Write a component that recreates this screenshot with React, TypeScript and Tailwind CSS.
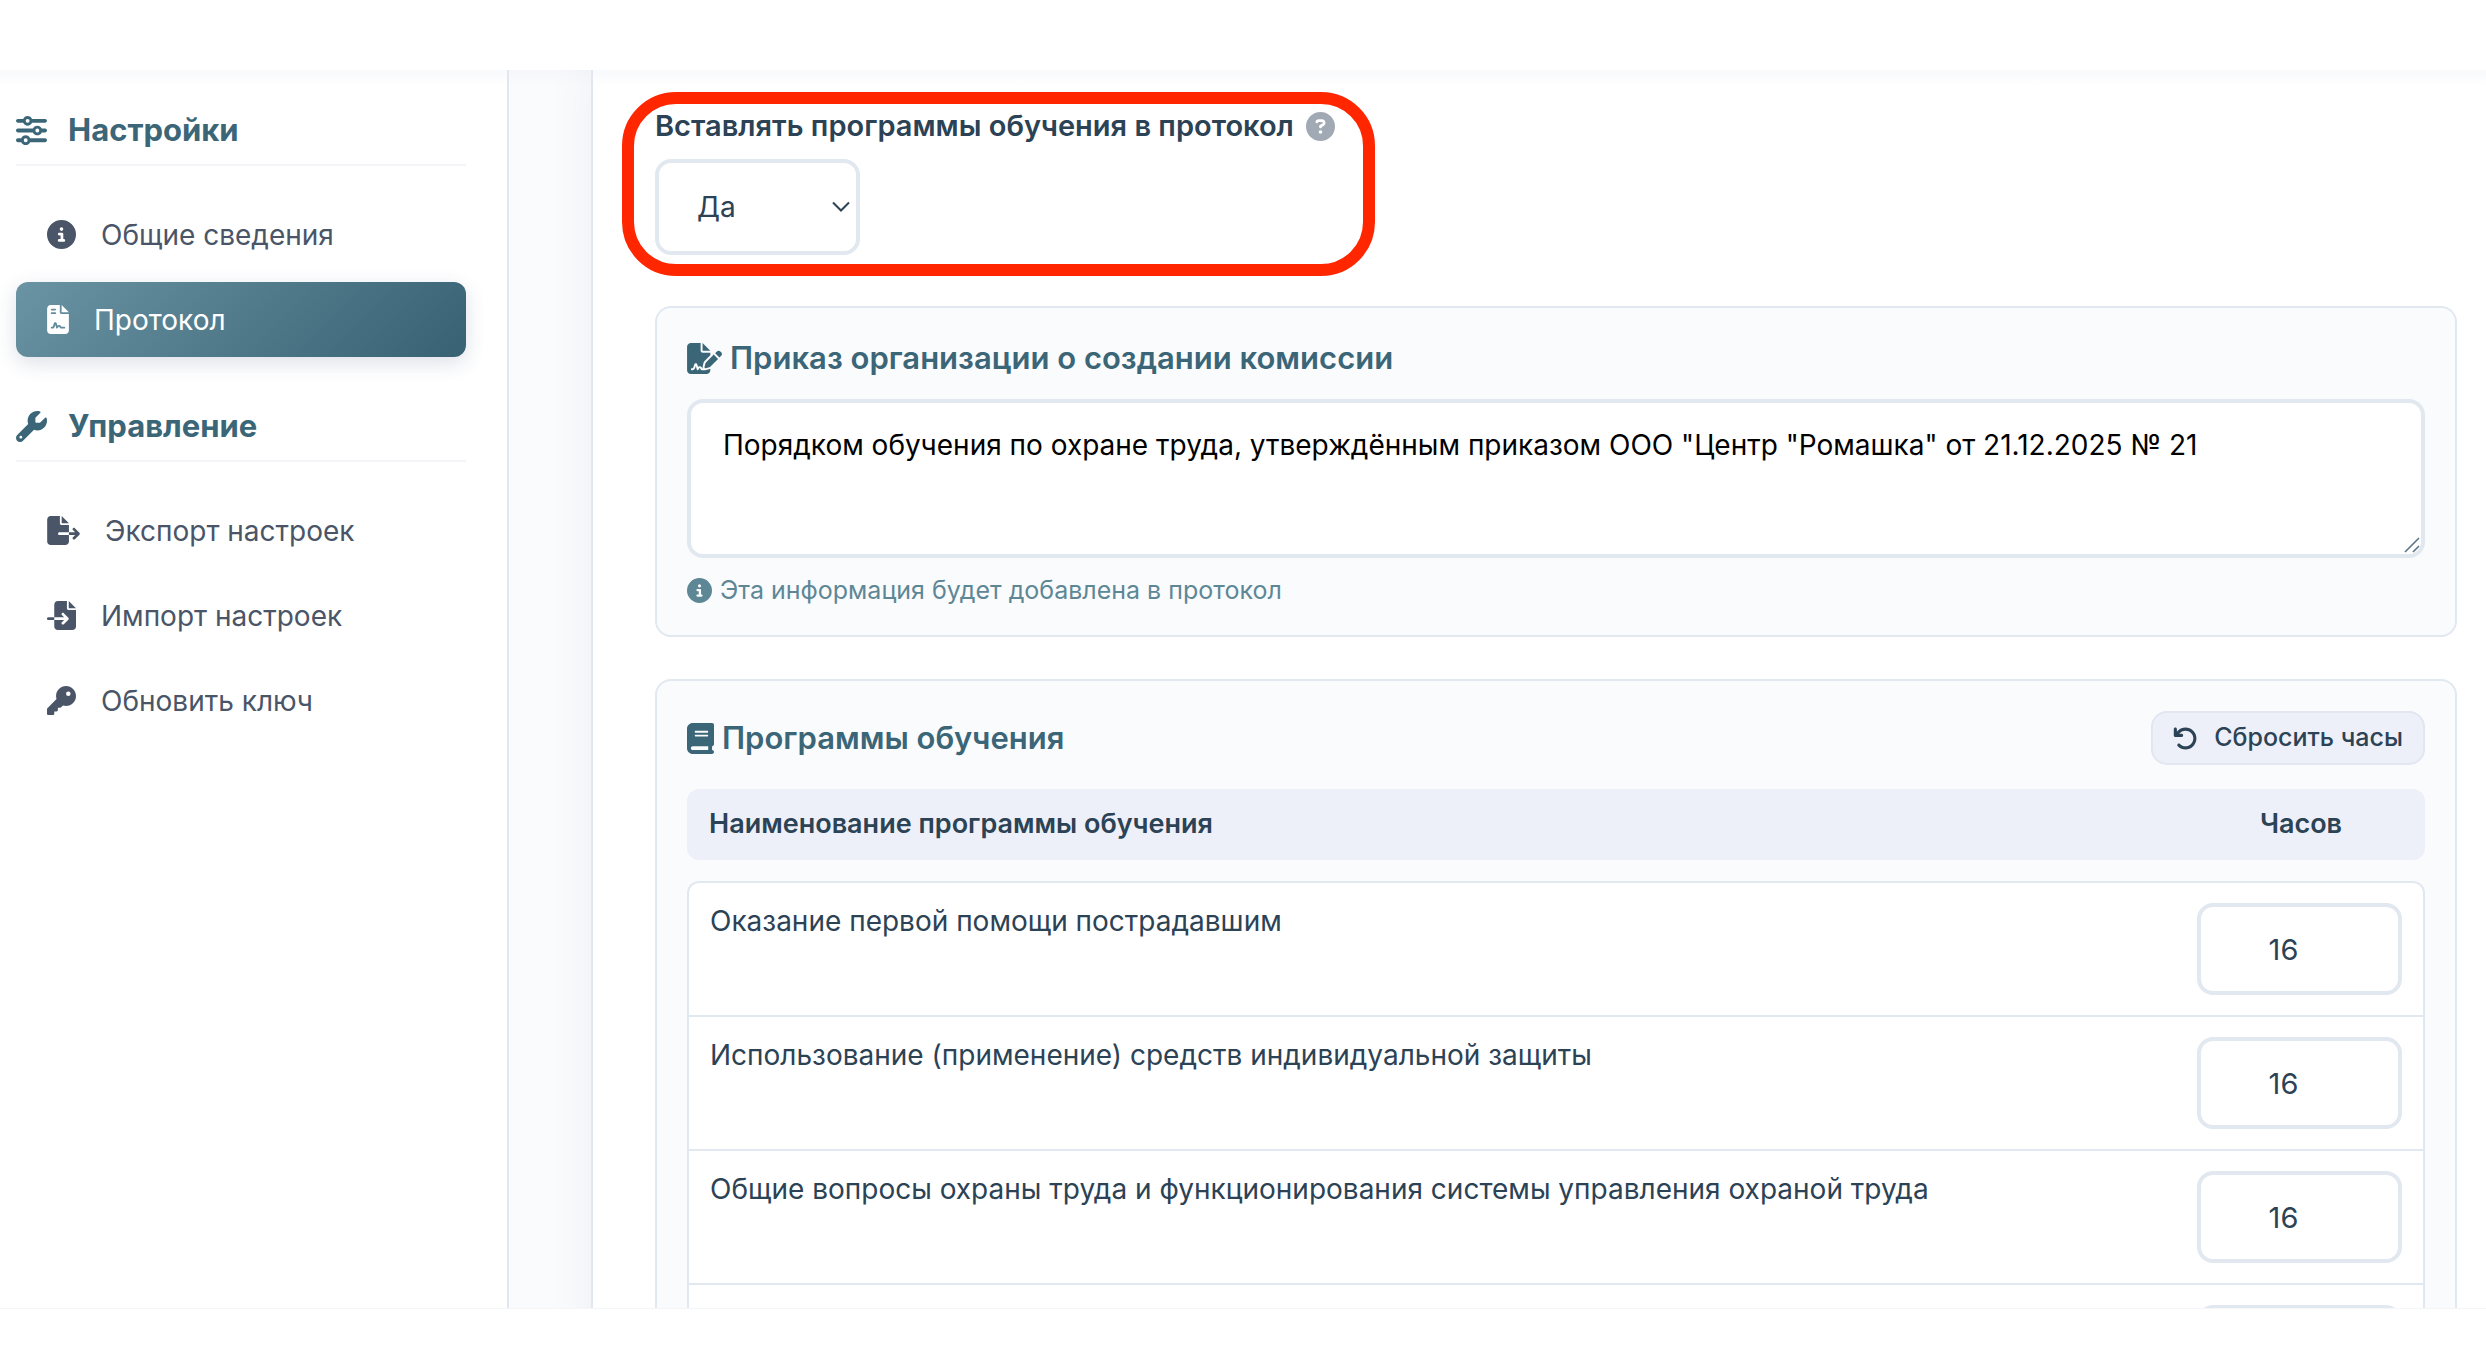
import { useState } from 'react';
import type { ReactNode } from 'react';
import {
  FaArrowRotateLeft,
  FaBook,
  FaCircleInfo,
  FaCircleQuestion,
  FaFileContract,
  FaFileExport,
  FaFileImport,
  FaFileSignature,
  FaKey,
  FaSliders,
  FaWrench,
} from 'react-icons/fa6';

function NavHeading({ icon, children }: { icon: ReactNode; children: ReactNode }) {
  return (
    <h2 className="flex items-center gap-[21px] border-b-2 border-[#f3f5f8] pb-3 text-[31px] leading-[44px] font-bold text-[#3b6678]">
      {icon}
      {children}
    </h2>
  );
}

function NavItem({ icon, active = false, children }: { icon: ReactNode; active?: boolean; children: ReactNode }) {
  const tone = active
    ? 'bg-linear-135 from-[#6a94a3] to-[#386173] text-white shadow-[0_6px_20px_rgba(45,65,110,0.16)]'
    : 'text-[#4a5568]';
  return (
    <li>
      <a
        href="#"
        aria-current={active ? 'page' : undefined}
        className={`flex h-[75px] items-center gap-[25px] rounded-xl px-[31px] text-[28px] ${tone}`}
      >
        {icon}
        {children}
      </a>
    </li>
  );
}

const programs = [
  'Оказание первой помощи пострадавшим',
  'Использование (применение) средств индивидуальной защиты',
  'Общие вопросы охраны труда и функционирования системы управления охраной труда',
  '',
];

export default function App() {
  const [insert, setInsert] = useState('yes');
  const [order, setOrder] = useState(
    'Порядком обучения по охране труда, утверждённым приказом ООО "Центр "Ромашка" от 21.12.2025 № 21',
  );
  const [hours, setHours] = useState(programs.map(() => '16'));

  return (
    <div className="flex h-screen flex-col bg-white pt-[70px] pb-[39px] font-[Inter,sans-serif] text-[#2c4255] [font-optical-sizing:none]">
      <div className="relative flex min-h-0 flex-1 overflow-hidden border-b border-[#f5f6f9]">
        <div className="pointer-events-none absolute inset-x-0 top-0 z-10 h-4 bg-linear-to-b from-[#e2e8f0]/25 to-transparent" />
        <aside className="w-[509px] shrink-0 border-r-2 border-[#e2e6f0] pt-[38px] pr-[41px] pl-4">
          <nav>
            <NavHeading icon={<FaSliders className="size-[31px]" />}>Настройки</NavHeading>
            <ul className="mt-[31px] mb-[47px] flex flex-col gap-2.5">
              <NavItem icon={<FaCircleInfo className="size-[29px]" />}>Общие сведения</NavItem>
              <NavItem active icon={<FaFileContract className="h-[29px] w-[22px]" />}>
                Протокол
              </NavItem>
            </ul>
            <NavHeading icon={<FaWrench className="size-[31px]" />}>Управление</NavHeading>
            <ul className="mt-[31px] flex flex-col gap-2.5">
              <NavItem icon={<FaFileExport className="h-[29px] w-[33px]" />}>Экспорт настроек</NavItem>
              <NavItem icon={<FaFileImport className="size-[29px]" />}>Импорт настроек</NavItem>
              <NavItem icon={<FaKey className="size-[29px]" />}>Обновить ключ</NavItem>
            </ul>
          </nav>
        </aside>

        <main className="min-w-0 flex-1 bg-[#fafbfd] pl-[82px]">
          <div className="min-h-full border-l-2 border-[#e2e6f0] bg-white pt-[35px] pr-[29px] pl-[62px] shadow-[0_0_44px_rgba(60,80,120,0.07)]">
            <section className="relative">
              <div className="pointer-events-none absolute -top-[13px] -left-[33px] h-[184px] w-[753px] rounded-[54px] border-[12px] border-[#ff2600]" />
              <div className="flex items-center gap-3">
                <label htmlFor="insert" className="text-[29px] leading-[42px] font-semibold">
                  Вставлять программы обучения в протокол
                </label>
                <button type="button" aria-label="Справка" className="text-[#a1aab4]">
                  <FaCircleQuestion className="size-[29px]" />
                </button>
              </div>
              <div className="relative mt-3 w-fit">
                <select
                  id="insert"
                  value={insert}
                  onChange={(e) => setInsert(e.target.value)}
                  className="block h-24 w-[205px] appearance-none rounded-2xl border-4 border-[#e2e8f0] bg-white pl-[38px] text-[28px]"
                >
                  <option value="yes">Да</option>
                  <option value="no">Нет</option>
                </select>
                <svg
                  viewBox="0 0 20 12"
                  fill="none"
                  stroke="#2c4255"
                  strokeWidth="2"
                  className="pointer-events-none absolute top-[42px] right-[9px] h-3 w-5"
                >
                  <path d="M2 1.5l8 8 8-8" />
                </svg>
              </div>
            </section>

            <section className="mt-[51px] rounded-2xl border-2 border-[#e2e8f0] bg-[#fafbfd] px-[30px] pt-[27px] pb-[26px]">
              <h3 className="text-[31px] leading-[46px] font-semibold text-[#3b6678]">
                <label htmlFor="order" className="flex items-center gap-2">
                  <FaFileSignature className="h-[31px] w-[35px]" />
                  Приказ организации о создании комиссии
                </label>
              </h3>
              <div className="relative mt-[18px]">
                <textarea
                  id="order"
                  value={order}
                  onChange={(e) => setOrder(e.target.value)}
                  className="block h-[159px] w-full resize-none rounded-2xl border-4 border-[#e2e8f0] bg-white px-8 py-5 text-[28px] leading-[44px] text-black"
                />
                <svg
                  viewBox="0 0 16 16"
                  fill="none"
                  stroke="#5d7585"
                  strokeWidth="1.6"
                  className="pointer-events-none absolute right-[5px] bottom-[5px] size-4"
                >
                  <path d="M1 15L15 1M9 15l6-6" />
                </svg>
              </div>
              <p className="mt-[13px] flex items-center gap-2 text-[25px] leading-[38px] text-[#5e8796]">
                <FaCircleInfo className="size-[25px]" />
                Эта информация будет добавлена в протокол
              </p>
            </section>

            <section className="mt-[42px] rounded-2xl border-2 border-[#e2e8f0] bg-[#fafbfd] px-[30px] pt-[30px] pb-8">
              <div className="flex items-center justify-between">
                <h3 className="flex items-center gap-2 text-[31px] font-semibold text-[#3b6678]">
                  <FaBook className="h-[31px] w-[27px]" />
                  Программы обучения
                </h3>
                <button
                  type="button"
                  onClick={() => setHours(programs.map(() => '16'))}
                  className="flex h-[54px] items-center gap-4 rounded-2xl border-2 border-[#e2e6f0] bg-[#edf0f8] px-5 text-[25px] font-medium"
                >
                  <FaArrowRotateLeft className="size-[25px]" />
                  Сбросить часы
                </button>
              </div>
              <table className="mt-6 w-full border-separate border-spacing-0">
                <thead>
                  <tr className="h-[71px] text-[27px]">
                    <th scope="col" className="rounded-l-xl bg-[#edf0f8] px-[22px] text-left font-semibold">
                      Наименование программы обучения
                    </th>
                    <th scope="col" className="w-[248px] rounded-r-xl bg-[#edf0f8] text-center font-semibold">
                      Часов
                    </th>
                  </tr>
                </thead>
                <tbody className="before:block before:h-[21px] before:content-['']">
                  {programs.map((name, i) => (
                    <tr key={i} className="group">
                      <td className="border-b-2 border-l-2 border-[#e2e8f0] bg-white py-5 pl-[21px] align-top text-[28px] leading-[37px] group-first:rounded-tl-xl group-first:border-t-2">
                        <label htmlFor={`hours-${i}`}>{name}</label>
                      </td>
                      <td className="border-r-2 border-b-2 border-[#e2e8f0] bg-white py-5 pr-[21px] group-first:rounded-tr-xl group-first:border-t-2">
                        <input
                          id={`hours-${i}`}
                          type="number"
                          value={hours[i]}
                          onChange={(e) => setHours(hours.map((h, n) => (n === i ? e.target.value : h)))}
                          className="ml-auto block h-[92px] w-[205px] appearance-none rounded-2xl border-4 border-[#e2e8f0] bg-white pr-8 text-center text-[29px] [-moz-appearance:textfield] [&::-webkit-inner-spin-button]:appearance-none"
                        />
                      </td>
                    </tr>
                  ))}
                </tbody>
              </table>
            </section>
          </div>
        </main>
      </div>
    </div>
  );
}
